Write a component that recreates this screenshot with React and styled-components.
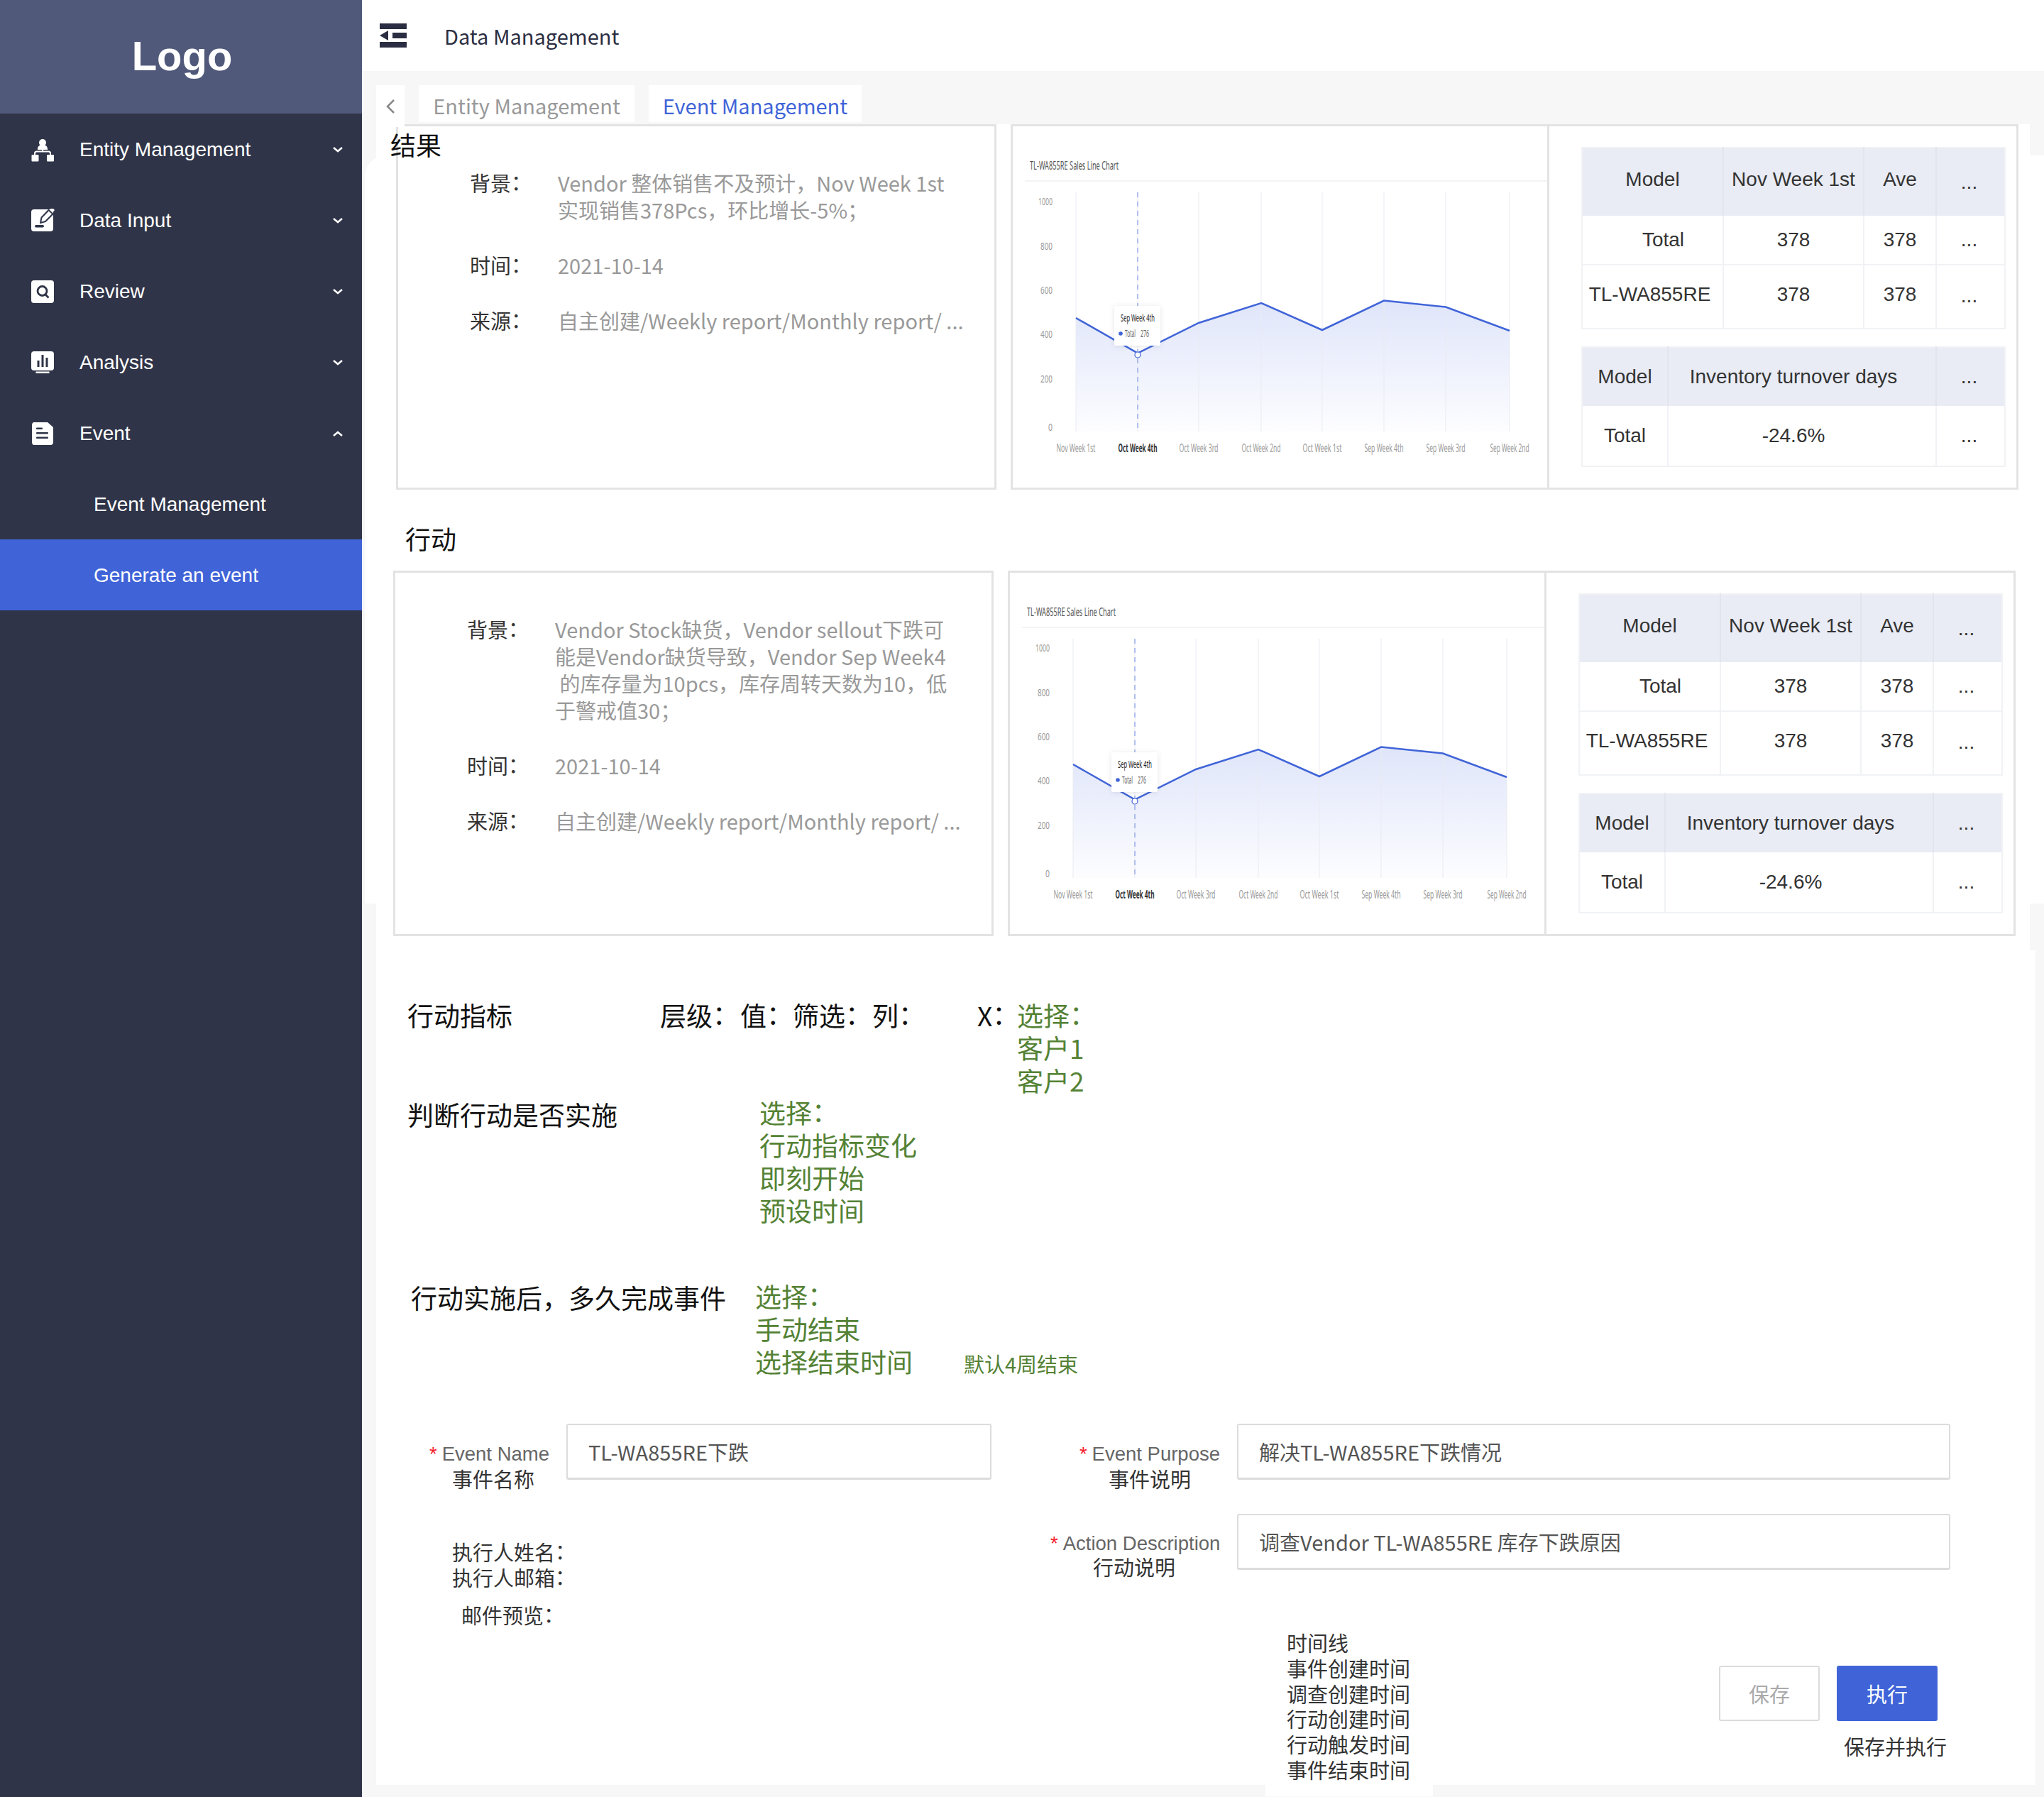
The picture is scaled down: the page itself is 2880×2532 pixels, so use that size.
import React from 'react';
import styled, { createGlobalStyle } from 'styled-components';

const GlobalStyle = createGlobalStyle`
    html, body {
        margin: 0;
        padding: 0;
        background: #f7f7f8;
    }
    * {
        box-sizing: border-box;
    }
    body {
        font-family: "Noto Sans CJK SC", "Noto Sans", sans-serif;
    }
`;

const Page = styled.div`
    display: flex;
    width: 2880px;
    height: 2532px;
    overflow: hidden;
`;

/* sidebar */
const Sidebar = styled.aside`
    width: 510px;
    flex: none;
    background: #2f3448;
    font-family: "Liberation Sans", Arial, sans-serif;
`;

const LogoBar = styled.div`
    height: 160px;
    padding: 0 0 4px 3px;
    display: flex;
    align-items: center;
    justify-content: center;
    background: #50597a;
    color: #fff;
    font-size: 58px;
    font-weight: 700;
`;

const MenuRow = styled.div`
    height: 100px;
    padding: 1px 27px 0 ${p => (p.$sub ? '132px' : '44px')};
    display: flex;
    align-items: center;
    color: #fff;
    font-size: 28px;
    background: ${p => (p.$active ? '#4064d8' : 'transparent')};
`;

const MenuIcon = styled.svg`
    width: 33px;
    height: 34px;
    margin-right: 35px;
    flex: none;
`;

const MenuLabel = styled.span`
    flex: 1;
`;

const Chevron = styled.svg`
    width: 14px;
    height: 8px;
    flex: none;
`;

const DARK = '#2f3448';

const icons = {
    entity: (
        <>
            <circle cx="16" cy="6" r="5" fill="#fff" />
            <path d="M9 15c0-4 3-6 7-6s7 2 7 6v1H9z" fill="#fff" />
            <path d="M5 25v-4c0-1.500 1-2.500 2.500-2.500h17c1.500 0 2.500 1 2.500 2.500v4M16 15v4" fill="none" stroke="#fff" strokeWidth="2" />
            <rect x="0.500" y="23" width="10" height="9.500" rx="1" fill="#fff" />
            <rect x="22" y="23" width="10" height="9.500" rx="1" fill="#fff" />
        </>
    ),
    input: (
        <>
            <rect x="0" y="0" width="31" height="31" rx="4" fill="#fff" />
            <path d="M13 19l1.500-7.500L24.500 1l6 5.500L20 17z" fill="#fff" stroke={DARK} strokeWidth="2" strokeLinejoin="round" />
            <path d="M26 -1.500l5 5 2-2.500-4-4z" fill="#fff" />
            <rect x="5" y="22" width="13" height="3.500" rx="1.700" fill={DARK} />
        </>
    ),
    review: (
        <>
            <rect x="0" y="0" width="32" height="32" rx="4" fill="#fff" />
            <circle cx="15.500" cy="15" r="6.500" fill="none" stroke={DARK} strokeWidth="2.800" />
            <path d="M20 20l4.500 4.500" stroke={DARK} strokeWidth="2.800" />
        </>
    ),
    analysis: (
        <>
            <rect x="0" y="0" width="32" height="27" rx="4" fill="#fff" />
            <rect x="8.500" y="13" width="3" height="9" fill={DARK} />
            <rect x="14.500" y="5" width="3" height="17" fill={DARK} />
            <rect x="20.500" y="9" width="3" height="13" fill={DARK} />
            <rect x="6.500" y="28.500" width="19" height="2.500" fill="#fff" />
        </>
    ),
    event: (
        <>
            <path d="M4 0h19l8 7v21c0 2-1 4-4 4H4c-2 0-3-2-3-4V4c0-2 1-4 3-4z" fill="#fff" />
            <rect x="7" y="7.500" width="9" height="2.500" rx="1" fill={DARK} />
            <rect x="7" y="14" width="17" height="2.500" rx="1" fill={DARK} />
            <rect x="7" y="20.500" width="17" height="2.500" rx="1" fill={DARK} />
        </>
    ),
};

const menu = [
    { key: 'entity', label: 'Entity Management' },
    { key: 'input', label: 'Data Input' },
    { key: 'review', label: 'Review' },
    { key: 'analysis', label: 'Analysis' },
    { key: 'event', label: 'Event', open: true },
];

/* header + tabs */
const Main = styled.main`
    flex: 1;
    min-width: 0;
`;

const TopBar = styled.header`
    height: 100px;
    padding-left: 25px;
    display: flex;
    align-items: center;
    gap: 53px;
    background: #fff;
    color: #2b2e42;
    font-size: 29px;
`;

const TabBar = styled.nav`
    height: 72px;
    margin-left: 20px;
    padding-top: 20px;
    display: flex;
    align-items: flex-start;
    gap: 20px;
`;

const BackTab = styled.div`
    width: 40px;
    height: 59px;
    position: relative;
    z-index: 1;
    display: flex;
    align-items: center;
    justify-content: center;
    background: #fff;
`;

const Tab = styled.div`
    width: ${p => p.$w}px;
    height: 52px;
    padding-top: 5px;
    display: flex;
    align-items: center;
    justify-content: center;
    background: #fff;
    font-size: 29px;
    line-height: 1;
    color: ${p => (p.$active ? '#4064d8' : '#999')};
`;

/* white sheet */
const Sheet = styled.section`
    position: relative;
    z-index: 0;
    width: 2330px;
    height: 2340px;
    margin-left: 20px;
    background: #fff;

    &::before {
        content: '';
        position: absolute;
        z-index: -1;
        left: -16px;
        right: -20px;
        top: 44px;
        height: 1054px;
        background: #fff;
        border-radius: 30px 0 0 0;
    }
    &::after {
        content: '';
        position: absolute;
        z-index: -1;
        left: 100%;
        width: 8px;
        top: 1164px;
        bottom: 0;
        background: #fff;
    }
`;

const PanelRow = styled.div`
    position: relative;
    display: flex;
    gap: 20px;
    margin-left: ${p => p.$left}px;
    margin-top: ${p => p.$top}px;
`;

const OverHeading = styled.h2`
    position: absolute;
    left: -8px;
    top: 4px;
    margin: 0;
    font-size: 36px;
    line-height: 48px;
    font-weight: 400;
    color: #111;
`;

const SectionHeading = styled.h2`
    margin: 44px 0 22px 41px;
    font-size: 36px;
    line-height: 48px;
    font-weight: 400;
    color: #111;
`;

const InfoBox = styled.div`
    width: 846px;
    height: 515px;
    flex: none;
    padding: 60px 0 0 101px;
    border: 3px solid #e3e3e3;
    background: #fff;
`;

const InfoRow = styled.div`
    display: flex;
    margin-bottom: 40px;
    font-size: 29px;
    line-height: 38px;
`;

const InfoLabel = styled.div`
    width: 124px;
    flex: none;
    color: #333;
`;

const InfoValue = styled.div`
    color: #999;
    white-space: pre;
`;

const Colon = styled.span`
    margin: 0 -0.3em 0 -0.25em;
    font-family: "Noto Sans CJK TC", sans-serif;
`;

const ChartPanel = styled.div`
    width: 1420px;
    height: 515px;
    flex: none;
    display: flex;
    border: 3px solid #e3e3e3;
    background: #fff;
`;

const ChartSlot = styled.div`
    width: 756px;
    flex: none;
    border-right: 3px solid #e3e3e3;
`;

const ChartSvg = styled.svg`
    display: block;
    width: 753px;
    height: 509px;
    font-family: "Noto Sans", sans-serif;
`;

const TableStack = styled.div`
    padding: 29px 0 0 45px;
    display: flex;
    flex-direction: column;
    gap: 24px;
`;

const Table = styled.table`
    width: 596px;
    table-layout: fixed;
    border-collapse: collapse;
    font-family: "Liberation Sans", Arial, sans-serif;
    font-size: 28px;
    color: #333;
    border: 2px solid #f1f2f5;
`;

const Col = styled.col`
    width: ${p => p.$w}px;
`;

const Row = styled.tr`
    height: ${p => p.$h}px;
`;

const Head = styled.th`
    padding: 0 ${p => p.$right || 0}px ${p => p.$bottom || 0}px 0;
    background: #e9ecf5;
    border-right: 2px solid #e2e5ee;
    font-weight: 400;
    white-space: nowrap;
    &:last-child {
        border-right: none;
    }
`;

const Cell = styled.td`
    padding: 0 ${p => p.$right || 0}px ${p => p.$bottom || 0}px ${p => p.$left || 0}px;
    text-align: center;
    white-space: nowrap;
    border-right: 2px solid #f1f2f5;
    border-bottom: 2px solid #f1f2f5;
    &:last-child {
        border-right: none;
    }
`;

/* action metric block */
const Metrics = styled.div`
    margin-top: 88px;
    padding-left: 44px;
    color: #111;
    font-size: 37px;
    line-height: 46px;
`;

const MetricRow = styled.div`
    display: flex;
    align-items: flex-start;
    margin-top: ${p => p.$top || 0}px;
    margin-left: ${p => p.$left || 0}px;
`;

const MetricCell = styled.div`
    width: ${p => p.$w}px;
    padding-top: ${p => p.$pad || 0}px;
    flex: none;
    white-space: nowrap;
`;

const Choices = styled.div`
    color: #548235;
    white-space: nowrap;
`;

const ChoiceNote = styled.span`
    margin-left: 72px;
    font-size: 29px;
`;

/* form */
const Form = styled.div`
    display: flex;
    margin-top: 62px;
    padding-left: 74px;
`;

const LeftColumn = styled.div`
    width: 876px;
    flex: none;
`;

const RightColumn = styled.div`
    width: 1268px;
    flex: none;
`;

const Field = styled.div`
    display: flex;
    align-items: flex-start;
    gap: 24px;
    height: 127px;
`;

const FieldLabel = styled.div`
    width: ${p => p.$w}px;
    padding-top: ${p => p.$pad}px;
    flex: none;
    text-align: right;
`;

const LabelEn = styled.div`
    font-family: "Liberation Sans", Arial, sans-serif;
    font-size: 27.5px;
    line-height: 35px;
    color: #666;
    white-space: nowrap;
`;

const Star = styled.span`
    margin-right: 7px;
    color: #f5222d;
`;

const LabelCn = styled.div`
    margin-top: ${p => p.$lift || 0}px;
    padding-right: ${p => p.$inset}px;
    font-size: 29px;
    line-height: 34px;
    color: #333;
    white-space: nowrap;
`;

const TextInput = styled.input`
    width: ${p => p.$w}px;
    height: 79px;
    padding: 0 29px;
    border: 2px solid #dcdcdc;
    border-bottom-width: 3px;
    border-radius: 3px;
    outline: none;
    background: #fff;
    color: #555;
    font-family: inherit;
    font-size: 29px;
`;

const PlainLines = styled.div`
    margin: ${p => p.$top}px 0 0 ${p => p.$left}px;
    font-size: 29px;
    line-height: 36px;
    color: #333;
    white-space: nowrap;
`;

const Footer = styled.div`
    display: flex;
    margin-top: 37px;
    padding-left: 303px;
`;

const Timeline = styled.div`
    width: 236px;
    height: 234px;
    padding: 0 30px;
    flex: none;
    background: #fff;
    font-size: 29px;
    line-height: 35.8px;
    color: #333;
    white-space: nowrap;
`;

const Actions = styled.div`
    margin: 50px 0 0 403px;
`;

const Buttons = styled.div`
    display: flex;
    gap: 24px;
`;

const Button = styled.button`
    width: 142px;
    height: 78px;
    border: ${p => (p.$primary ? 'none' : '2px solid #dcdcdc')};
    border-radius: 3px;
    background: ${p => (p.$primary ? '#4064d8' : '#fff')};
    color: ${p => (p.$primary ? '#fff' : '#aaa')};
    font-family: inherit;
    font-size: 29px;
`;

const ActionNote = styled.div`
    margin: 17px 0 0 176px;
    font-size: 29px;
    line-height: 36px;
    color: #333;
    white-space: nowrap;
`;

/* chart data, in px of the chart box */
const ticks = [89, 176, 262, 350, 436, 523, 610, 700];
const values = [270, 319.5, 277, 249, 287, 245.5, 254.5, 288];
const xNames = ['Nov Week 1st', 'Oct Week 4th', 'Oct Week 3rd', 'Oct Week 2nd', 'Oct Week 1st', 'Sep Week 4th', 'Sep Week 3rd', 'Sep Week 2nd'];
const yNames = [['1000', 105, 20], ['800', 168, 17], ['600', 230, 17], ['400', 292, 17], ['200', 354.5, 17], ['0', 423, 6]];
const chartTop = 93;
const chartBottom = 430;

const SalesChart = ({ id }) => {
    const line = ticks.map((x, i) => `${x},${values[i]}`).join(' ');
    return (
        <ChartSvg viewBox="0 0 753 509">
            <defs>
                <linearGradient id={id} x1="0" y1="0" x2="0" y2="1">
                    <stop offset="0" stopColor="#dfe5fa" />
                    <stop offset="1" stopColor="#fdfdff" />
                </linearGradient>
                <filter id={`${id}-shadow`} x="-30%" y="-30%" width="160%" height="160%">
                    <feDropShadow dx="0" dy="1" stdDeviation="3" floodColor="#5a6480" floodOpacity="0.18" />
                </filter>
            </defs>
            <text x="24" y="61" fontSize="16" fill="#555" textLength="125" lengthAdjust="spacingAndGlyphs">TL-WA855RE Sales Line Chart</text>
            <line x1="17" y1="77" x2="753" y2="77" stroke="#f1f1f3" strokeWidth="1.500" />
            <polygon points={`${ticks[0]},${chartBottom} ${line} ${ticks[7]},${chartBottom}`} fill={`url(#${id})`} />
            {ticks.map(x => (
                <line key={x} x1={x} y1={chartTop} x2={x} y2={chartBottom} stroke="#e9ebf1" strokeWidth="1" />
            ))}
            <line x1="176" y1={chartTop} x2="176" y2={chartBottom} stroke="#6f8ae4" strokeWidth="1" strokeDasharray="7 6" />
            <polyline points={line} fill="none" stroke="#4064d8" strokeWidth="2.500" />
            {yNames.map(([name, y, w]) => (
                <text key={name} x="56" y={y + 6} fontSize="15" fill="#999" textAnchor="end" textLength={w} lengthAdjust="spacingAndGlyphs">{name}</text>
            ))}
            {xNames.map((name, i) => (
                <text
                    key={name}
                    x={ticks[i]}
                    y="459"
                    fontSize="16"
                    fill={i === 1 ? '#333' : '#999'}
                    fontWeight={i === 1 ? 700 : 400}
                    textAnchor="middle"
                    textLength="55"
                    lengthAdjust="spacingAndGlyphs"
                >
                    {name}
                </text>
            ))}
            <circle cx="176" cy="322" r="4" fill="#fff" stroke="#4064d8" strokeWidth="1.200" />
            <rect x="143" y="253" width="65" height="56" rx="2" fill="#fff" filter={`url(#${id}-shadow)`} />
            <text x="176" y="275" fontSize="15" fill="#222" textAnchor="middle" textLength="48" lengthAdjust="spacingAndGlyphs">Sep Week 4th</text>
            <circle cx="152" cy="292" r="2.800" fill="#4064d8" />
            <text x="158" y="297" fontSize="14" fill="#666" textLength="15" lengthAdjust="spacingAndGlyphs">Total</text>
            <text x="180" y="297" fontSize="14" fill="#666" textLength="12" lengthAdjust="spacingAndGlyphs">276</text>
        </ChartSvg>
    );
};

const SalesTables = () => (
    <TableStack>
        <Table>
            <colgroup>
                <Col $w={199} />
                <Col $w={198} />
                <Col $w={102} />
                <Col $w={97} />
            </colgroup>
            <thead>
                <Row $h={96}>
                    <Head $bottom={8}>Model</Head>
                    <Head $bottom={8}>Nov Week 1st</Head>
                    <Head $bottom={8}>Ave</Head>
                    <Head $right={4}>...</Head>
                </Row>
            </thead>
            <tbody>
                <Row $h={69}>
                    <Cell $left={30}>Total</Cell>
                    <Cell>378</Cell>
                    <Cell>378</Cell>
                    <Cell $right={4}>...</Cell>
                </Row>
                <Row $h={90}>
                    <Cell $bottom={7} $right={8}>TL-WA855RE</Cell>
                    <Cell $bottom={7}>378</Cell>
                    <Cell $bottom={7}>378</Cell>
                    <Cell $right={4} $bottom={3}>...</Cell>
                </Row>
            </tbody>
        </Table>
        <Table>
            <colgroup>
                <Col $w={121} />
                <Col $w={378} />
                <Col $w={97} />
            </colgroup>
            <thead>
                <Row $h={83}>
                    <Head>Model</Head>
                    <Head $right={24}>Inventory turnover days</Head>
                    <Head $right={4}>...</Head>
                </Row>
            </thead>
            <tbody>
                <Row $h={85}>
                    <Cell>Total</Cell>
                    <Cell $right={24}>-24.6%</Cell>
                    <Cell $right={4}>...</Cell>
                </Row>
            </tbody>
        </Table>
    </TableStack>
);

const Info = ({ label, children }) => (
    <InfoRow>
        <InfoLabel>{label}<Colon>：</Colon></InfoLabel>
        <InfoValue>{children}</InfoValue>
    </InfoRow>
);

const Panels = ({ id, background }) => (
    <>
        <InfoBox>
            <Info label="背景">{background}</Info>
            <Info label="时间">2021-10-14</Info>
            <Info label="来源">自主创建/Weekly report/Monthly report/ ...</Info>
        </InfoBox>
        <ChartPanel>
            <ChartSlot>
                <SalesChart id={id} />
            </ChartSlot>
            <SalesTables />
        </ChartPanel>
    </>
);

const FormField = ({ labelWidth, labelPad = 25, inset, lift, en, cn, value, inputWidth }) => (
    <Field>
        <FieldLabel $w={labelWidth} $pad={labelPad}>
            <LabelEn><Star>*</Star>{en}</LabelEn>
            <LabelCn $inset={inset} $lift={lift}>{cn}</LabelCn>
        </FieldLabel>
        <TextInput $w={inputWidth} readOnly defaultValue={value} />
    </Field>
);

const Lines = ({ items }) => items.map(text => <div key={text}>{text}</div>);

const App = () => (
    <Page>
        <GlobalStyle />
        <Sidebar>
            <LogoBar>Logo</LogoBar>
            {menu.map(item => (
                <MenuRow key={item.key}>
                    <MenuIcon viewBox="0 -1 33 34">{icons[item.key]}</MenuIcon>
                    <MenuLabel>{item.label}</MenuLabel>
                    <Chevron viewBox="0 0 14 8">
                        <path d={item.open ? 'M1 7l6-5 6 5' : 'M1 1l6 5 6-5'} fill="none" stroke="#fff" strokeWidth="2.500" />
                    </Chevron>
                </MenuRow>
            ))}
            <MenuRow $sub>Event Management</MenuRow>
            <MenuRow $sub $active>Generate an event</MenuRow>
        </Sidebar>
        <Main>
            <TopBar>
                <svg width="38" height="34" viewBox="0 0 38 34">
                    <rect width="38" height="8" fill="#2b2e42" />
                    <polygon points="0,17 12,10 12,24" fill="#2b2e42" />
                    <rect x="18" y="13" width="20" height="8" fill="#2b2e42" />
                    <rect y="26" width="38" height="8" fill="#2b2e42" />
                </svg>
                Data Management
            </TopBar>
            <TabBar>
                <BackTab>
                    <svg width="14" height="20" viewBox="0 0 14 20">
                        <path d="M12 1L3 10l9 9" fill="none" stroke="#888" strokeWidth="2.500" />
                    </svg>
                </BackTab>
                <Tab $w={304}>Entity Management</Tab>
                <Tab $w={300} $active>Event Management</Tab>
            </TabBar>
            <Sheet>
                <PanelRow $left={28} $top={3}>
                    <OverHeading>结果</OverHeading>
                    <Panels
                        id="result"
                        background={'Vendor 整体销售不及预计，Nov Week 1st\n实现销售378Pcs，环比增长-5%；'}
                    />
                </PanelRow>
                <SectionHeading>行动</SectionHeading>
                <PanelRow $left={24} $top={0}>
                    <Panels
                        id="action"
                        background={'Vendor Stock缺货，Vendor sellout下跌可\n能是Vendor缺货导致，Vendor Sep Week4\n 的库存量为10pcs，库存周转天数为10，低\n于警戒值30；'}
                    />
                </PanelRow>

                <Metrics>
                    <MetricRow>
                        <MetricCell $w={356}>行动指标</MetricCell>
                        <MetricCell $w={113}>层级<Colon>：</Colon></MetricCell>
                        <MetricCell $w={74}>值<Colon>：</Colon></MetricCell>
                        <MetricCell $w={112}>筛选<Colon>：</Colon></MetricCell>
                        <MetricCell $w={148}>列<Colon>：</Colon></MetricCell>
                        <MetricCell $w={56}>X<Colon>：</Colon></MetricCell>
                        <Choices>
                            <div>选择<Colon>：</Colon></div>
                            <Lines items={['客户1', '客户2']} />
                        </Choices>
                    </MetricRow>
                    <MetricRow $top={-1}>
                        <MetricCell $w={496} $pad={3}>判断行动是否实施</MetricCell>
                        <Choices>
                            <div>选择<Colon>：</Colon></div>
                            <Lines items={['行动指标变化', '即刻开始', '预设时间']} />
                        </Choices>
                    </MetricRow>
                    <MetricRow $top={75} $left={5}>
                        <MetricCell $w={485} $pad={2}>行动实施后，多久完成事件</MetricCell>
                        <Choices>
                            <div>选择<Colon>：</Colon></div>
                            <div>手动结束</div>
                            <div>选择结束时间<ChoiceNote>默认4周结束</ChoiceNote></div>
                        </Choices>
                    </MetricRow>
                </Metrics>

                <Form>
                    <LeftColumn>
                        <FormField
                            labelWidth={170}
                            inset={21}
                            en="Event Name"
                            cn="事件名称"
                            inputWidth={599}
                            value="TL-WA855RE下跌"
                        />
                        <PlainLines $top={35} $left={33}>
                            <div>执行人姓名<Colon>：</Colon></div>
                            <div>执行人邮箱<Colon>：</Colon></div>
                        </PlainLines>
                        <PlainLines $top={17} $left={46}>
                            邮件预览<Colon>：</Colon>
                        </PlainLines>
                    </LeftColumn>
                    <RightColumn>
                        <FormField
                            labelWidth={239}
                            inset={41}
                            en="Event Purpose"
                            cn="事件说明"
                            inputWidth={1005}
                            value="解决TL-WA855RE下跌情况"
                        />
                        <FormField
                            labelWidth={239}
                            labelPad={24}
                            inset={63}
                            lift={-2}
                            en="Action Description"
                            cn="行动说明"
                            inputWidth={1005}
                            value="调查Vendor TL-WA855RE 库存下跌原因"
                        />
                        <Footer>
                            <Timeline>
                                <Lines items={['时间线', '事件创建时间', '调查创建时间', '行动创建时间', '行动触发时间', '事件结束时间']} />
                            </Timeline>
                            <Actions>
                                <Buttons>
                                    <Button>保存</Button>
                                    <Button $primary>执行</Button>
                                </Buttons>
                                <ActionNote>保存并执行</ActionNote>
                            </Actions>
                        </Footer>
                    </RightColumn>
                </Form>
            </Sheet>
        </Main>
    </Page>
);

export default App;
